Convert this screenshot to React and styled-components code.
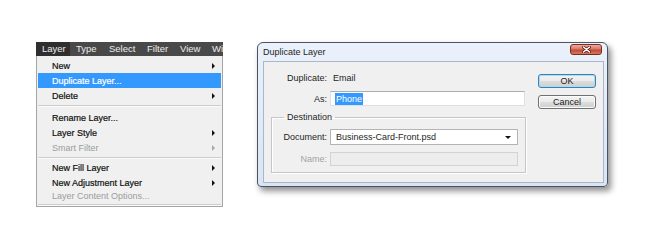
import styled, { createGlobalStyle } from 'styled-components'

const GlobalStyle = createGlobalStyle`
	html, body {
		margin: 0;
		background: #fff;
	}
	body {
		font-family: "Liberation Sans", Arial, sans-serif;
	}
`

const Page = styled.div`
	width: 650px;
	height: 242px;
	box-sizing: border-box;
	padding: 42px 0 0 36px;
	display: flex;
	align-items: flex-start;
	gap: 34px;
	overflow: hidden;
`

/* ---------- Photoshop menu ---------- */

const Menu = styled.div`
	width: 187px;
	display: flex;
	flex-direction: column;
`

const MenuBar = styled.div`
	height: 14px;
	background: #494949;
	display: flex;
`

const BarItem = styled.div`
	flex: none;
	width: ${p => p.$w}px;
	box-sizing: border-box;
	padding-left: 6px;
	font-size: 9.5px;
	line-height: 14px;
	color: #ededed;
	white-space: nowrap;
	background: ${p => (p.$active ? '#2f2f2f' : 'transparent')};
`

const MenuPanel = styled.div`
	background: #f0f0f0;
	border: 1px solid #a5a5a5;
	border-top: none;
	padding: 2px 1px 0;
`

const Item = styled.div`
	height: ${p => p.$h || 15}px;
	display: flex;
	align-items: center;
	justify-content: space-between;
	padding: 0 6px 0 14px;
	font-size: 9px;
	-webkit-text-stroke: ${p => (p.$disabled ? '0' : '0.2px')};
	color: ${p => (p.$active ? '#fff' : p.$disabled ? '#9c9c9c' : '#111')};
	background: ${p => (p.$active ? '#3399ff' : 'transparent')};
`

const Arrow = styled.span`
	width: 0;
	height: 0;
	border-top: 3px solid transparent;
	border-bottom: 3px solid transparent;
	border-left: 3px solid ${p => (p.$disabled ? '#a8a8a8' : '#111')};
`

const Separator = styled.div`
	margin: 2px 0 ${p => p.$mb}px;
	border-top: 1px solid #cdcdcd;
	border-bottom: 1px solid #fafafa;
`

/* ---------- Duplicate Layer dialog ---------- */

const Dialog = styled.div`
	width: 351px;
	box-sizing: border-box;
	border: 1px solid #4a5462;
	border-radius: 6px 6px 4px 4px;
	background: linear-gradient(#eaf1fa, #dae5f3);
	box-shadow: 3px 4px 6px rgba(0, 0, 0, 0.45);
	padding: 0 3px 3px 5px;
`

const TitleBar = styled.div`
	height: 18px;
	display: flex;
	justify-content: space-between;
	align-items: flex-start;
`

const Title = styled.span`
	font-size: 9px;
	line-height: 18px;
	color: #1e1e1e;
`

const CloseButton = styled.div`
	width: 32px;
	height: 11px;
	box-sizing: border-box;
	margin: 1px 2px 0 0;
	border: 1px solid #7a2b1f;
	border-radius: 3px;
	background: linear-gradient(#ebab9f 0%, #d67867 45%, #c24a33 55%, #d47a5f 100%);
	display: flex;
	align-items: center;
	justify-content: center;
`

const Panel = styled.div`
	height: 122px;
	box-sizing: border-box;
	border: 1px solid #a8b7cb;
	background: #f0f0f0;
	display: flex;
	align-items: flex-start;
	font-size: 9px;
	color: #1e1e1e;
`

const FormCol = styled.div`
	width: 262px;
	padding-top: 9px;
	display: flex;
	flex-direction: column;
`

const Row = styled.div`
	display: flex;
	align-items: center;
	height: ${p => p.$h}px;
	margin-top: ${p => p.$mt || 0}px;
`

const Label = styled.div`
	flex: none;
	width: ${p => p.$w}px;
	text-align: right;
	color: ${p => (p.$disabled ? '#a3a3a3' : '#1e1e1e')};
`

const Value = styled.div`
	margin-left: 6px;
`

const TextInput = styled.div`
	margin-left: 3px;
	width: 195px;
	height: 15px;
	box-sizing: border-box;
	background: #fff;
	border: 1px solid #dbdfe6;
	border-top-color: #abadb3;
	padding-left: 4px;
	display: flex;
	align-items: center;
`

const Selected = styled.span`
	background: #3399ff;
	color: #fff;
	padding: 1px 1px;
	line-height: 10px;
`

const Group = styled.fieldset`
	margin: 5px 0 0 7px;
	width: 255px;
	box-sizing: border-box;
	padding: 6px 7px 6px 0;
	border: 1px solid #c6c6c6;
	box-shadow: inset 1px 1px 0 #fff, 1px 1px 0 #fff;
	min-width: 0;
`

const Legend = styled.legend`
	margin-left: 12px;
	padding: 0 3px;
	font-size: 9px;
	line-height: 12px;
	color: #1e1e1e;
`

const Select = styled.div`
	margin-left: 3px;
	width: 188px;
	height: 16px;
	box-sizing: border-box;
	background: #fff;
	border: 1px solid #b4b4b4;
	padding: 0 6px 0 5px;
	display: flex;
	align-items: center;
	justify-content: space-between;
`

const Caret = styled.span`
	width: 0;
	height: 0;
	border-left: 3px solid transparent;
	border-right: 3px solid transparent;
	border-top: 3px solid #111;
`

const DisabledInput = styled.div`
	margin-left: 3px;
	width: 188px;
	height: 14px;
	box-sizing: border-box;
	background: #ededed;
	border: 1px solid #d3d3d3;
`

const ButtonCol = styled.div`
	margin-left: 12px;
	padding-top: 12px;
	display: flex;
	flex-direction: column;
	gap: 7px;
`

const Button = styled.div`
	width: 58px;
	height: 14px;
	box-sizing: border-box;
	border: 1px solid ${p => (p.$default ? '#3c7fb1' : '#707070')};
	border-radius: 3px;
	background: linear-gradient(#f3f3f3 0%, #ebebeb 49%, #dddddd 50%, #cfcfcf 100%);
	box-shadow: ${p => (p.$default ? 'inset 0 0 0 1px #a8dcf8' : 'inset 0 0 0 1px #fbfbfb')};
	font-size: 9px;
	color: #1b1b1b;
	display: flex;
	align-items: center;
	justify-content: center;
`

const menuBar = [
	{ label: 'Layer', w: 34, active: true },
	{ label: 'Type', w: 33 },
	{ label: 'Select', w: 38 },
	{ label: 'Filter', w: 33 },
	{ label: 'View', w: 32 },
	{ label: 'Wi', w: 17 },
]

const menuItems = [
	{ label: 'New', sub: true },
	{ label: 'Duplicate Layer...', active: true },
	{ label: 'Delete', sub: true },
	{ sep: 3 },
	{ label: 'Rename Layer...' },
	{ label: 'Layer Style', sub: true },
	{ label: 'Smart Filter', sub: true, disabled: true },
	{ sep: 1 },
	{ label: 'New Fill Layer', sub: true },
	{ label: 'New Adjustment Layer', sub: true },
	{ label: 'Layer Content Options...', disabled: true, h: 12 },
]

const App = () => {
	return (
		<>
			<GlobalStyle />
			<Page>
				<Menu>
					<MenuBar>
						{menuBar.map(m => (
							<BarItem key={m.label} $w={m.w} $active={m.active}>{m.label}</BarItem>
						))}
					</MenuBar>
					<MenuPanel>
						{menuItems.map((it, i) =>
							it.sep ? (
								<Separator key={i} $mb={it.sep} />
							) : (
								<Item key={i} $h={it.h} $active={it.active} $disabled={it.disabled}>
									<span>{it.label}</span>
									{it.sub && <Arrow $disabled={it.disabled} />}
								</Item>
							)
						)}
						<Separator $mb={0} />
					</MenuPanel>
				</Menu>

				<Dialog>
					<TitleBar>
						<Title>Duplicate Layer</Title>
						<CloseButton>
							<svg width="9" height="7" viewBox="0 0 9 7">
								<path d="M1.5 1 L7.5 6 M7.5 1 L1.5 6" stroke="#5a1a10" strokeWidth="3" strokeLinecap="round" />
								<path d="M1.5 1 L7.5 6 M7.5 1 L1.5 6" stroke="#fff" strokeWidth="1.6" strokeLinecap="round" />
							</svg>
						</CloseButton>
					</TitleBar>
					<Panel>
						<FormCol>
							<Row $h={14}>
								<Label $w={63}>Duplicate:</Label>
								<Value>Email</Value>
							</Row>
							<Row $h={15} $mt={6}>
								<Label $w={63}>As:</Label>
								<TextInput><Selected>Phone</Selected></TextInput>
							</Row>
							<Group>
								<Legend>Destination</Legend>
								<Row $h={16}>
									<Label $w={55}>Document:</Label>
									<Select>
										<span>Business-Card-Front.psd</span>
										<Caret />
									</Select>
								</Row>
								<Row $h={14} $mt={7}>
									<Label $w={55} $disabled>Name:</Label>
									<DisabledInput />
								</Row>
							</Group>
						</FormCol>
						<ButtonCol>
							<Button $default>OK</Button>
							<Button>Cancel</Button>
						</ButtonCol>
					</Panel>
				</Dialog>
			</Page>
		</>
	)
}

export default App
